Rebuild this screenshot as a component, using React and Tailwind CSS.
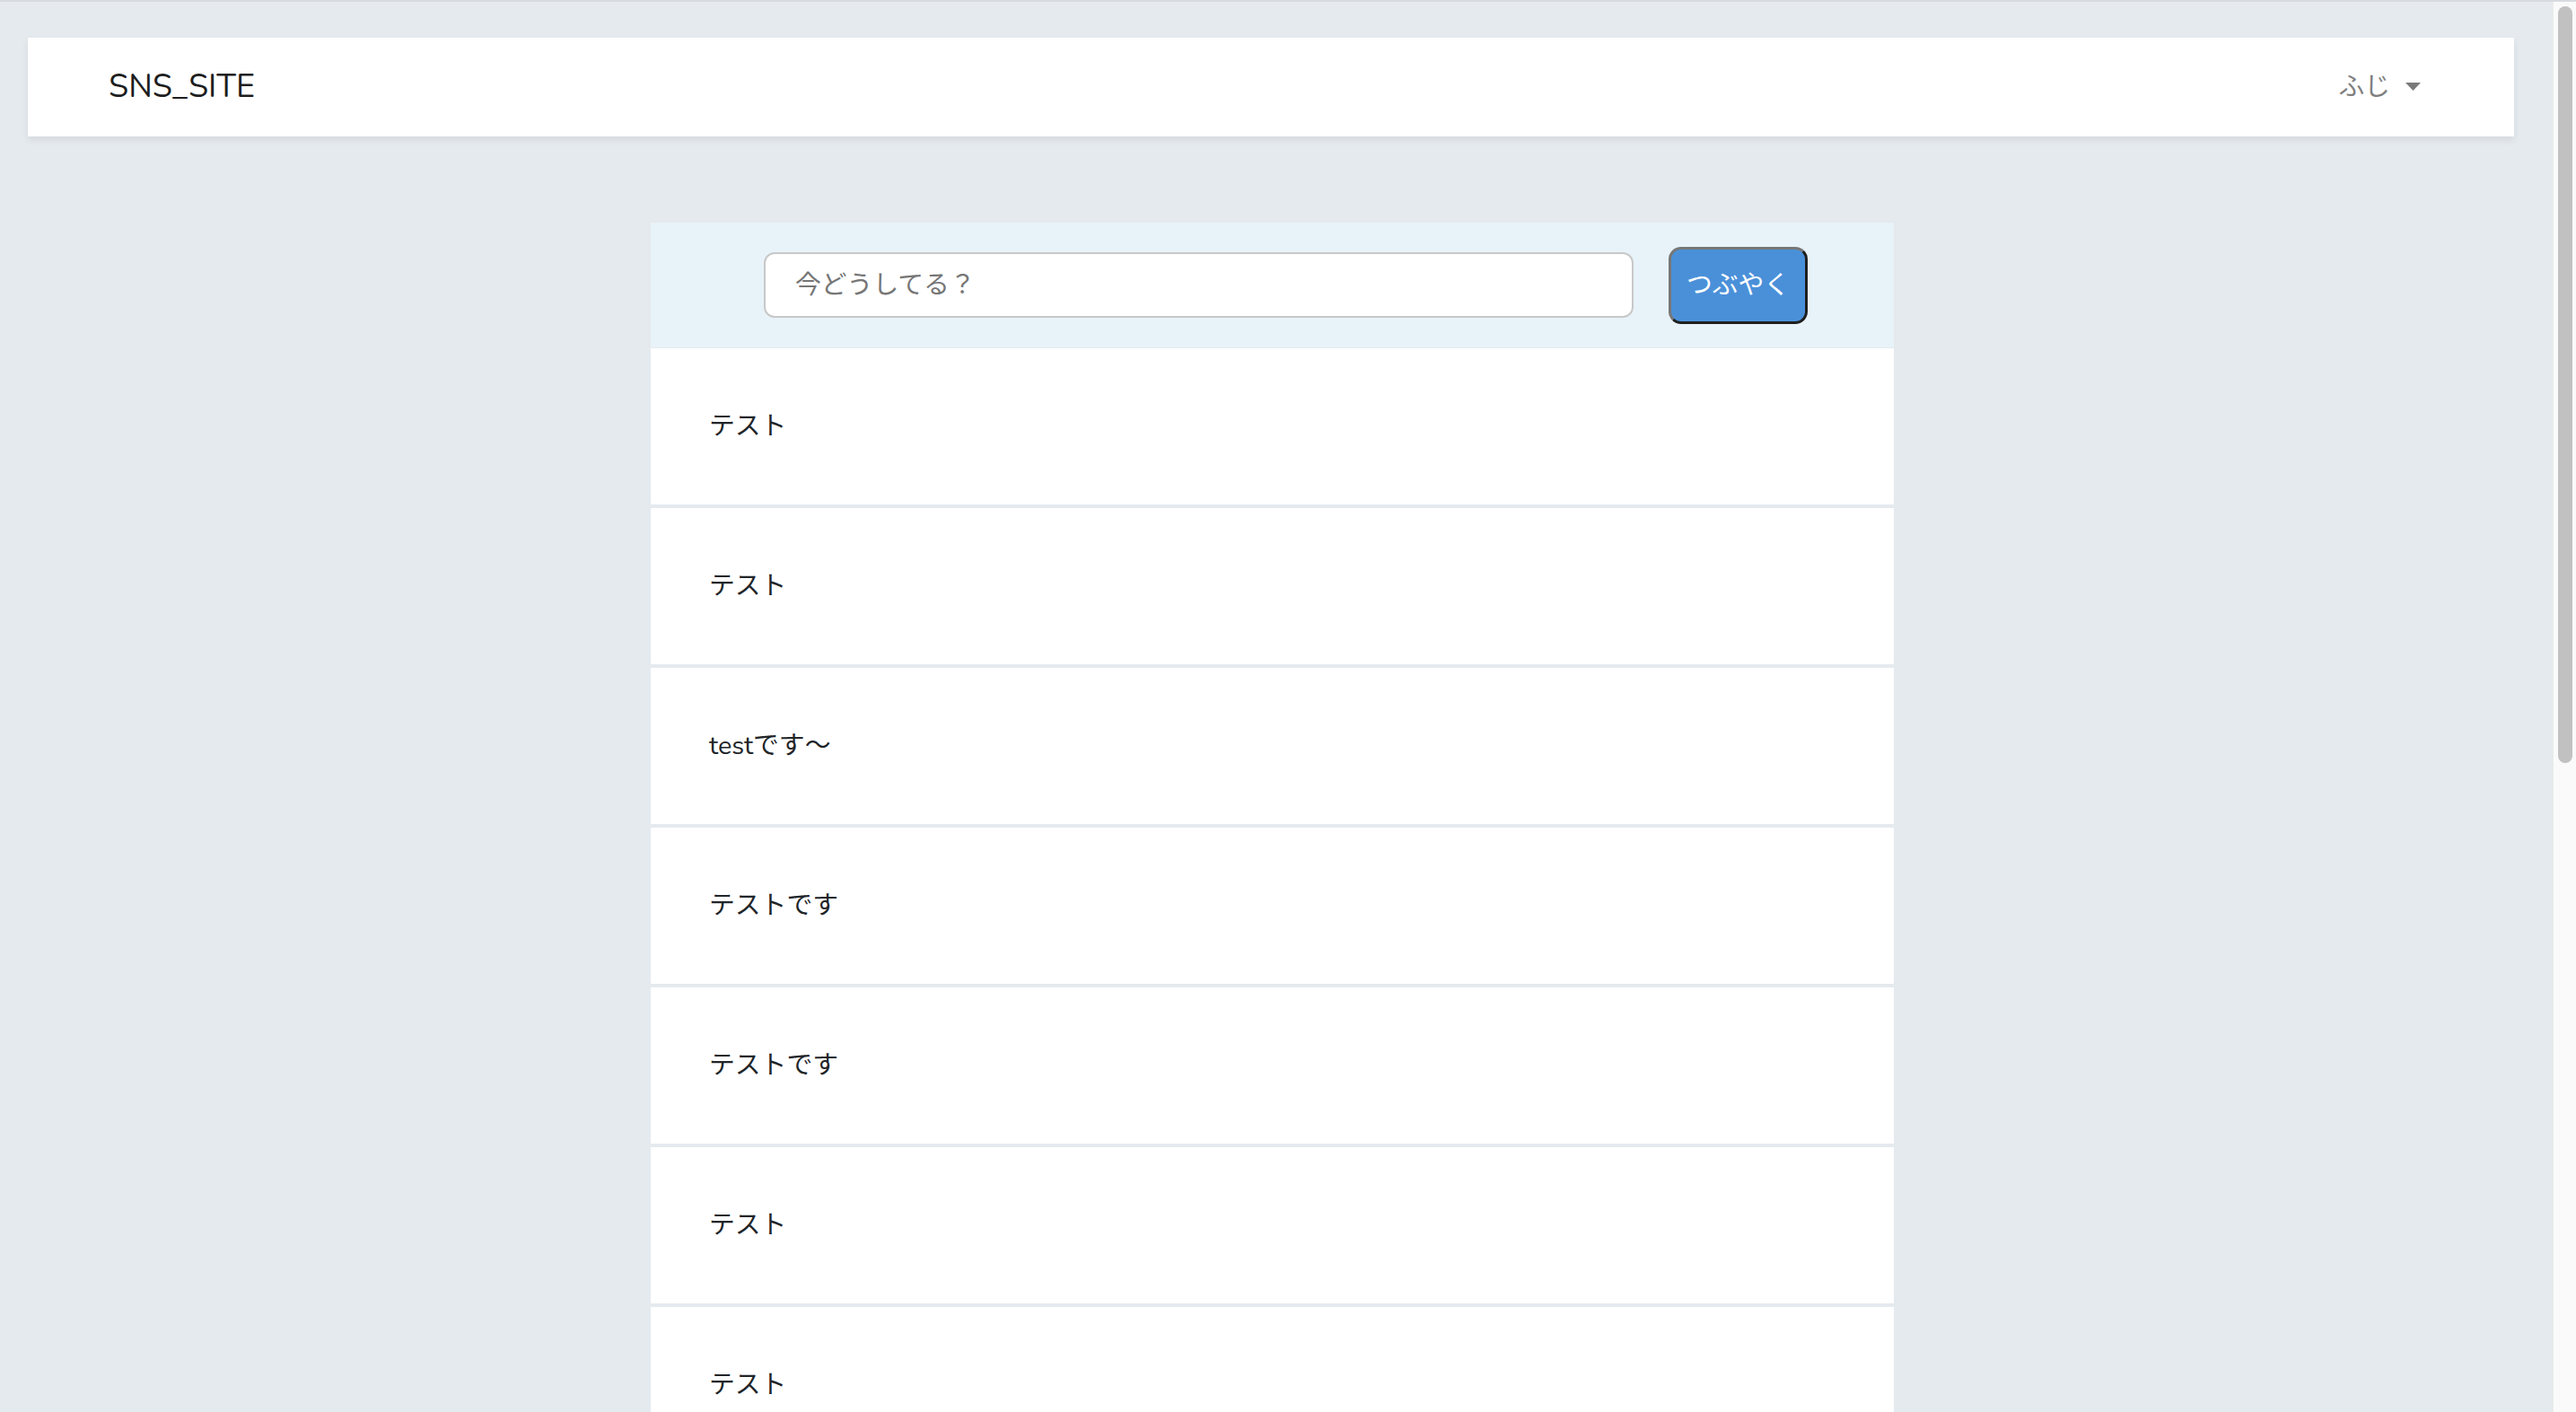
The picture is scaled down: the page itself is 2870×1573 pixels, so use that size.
import React from "react";

const posts = [
  "テスト",
  "テスト",
  "testです～",
  "テストです",
  "テストです",
  "テスト",
  "テスト",
  "テスト",
  "テスト",
];

export default function App() {
  return (
    <div
      className="h-screen w-screen overflow-hidden flex flex-col bg-[#e5eaef]"
      style={{ fontFamily: '"Nunito", Lato, "Noto Sans CJK JP", sans-serif' }}
    >
      <div className="h-[2px] shrink-0 bg-[#d8dce0]" />
      <div className="flex-1 flex min-h-0">
        <div className="flex-1 min-w-0 overflow-hidden">
          <nav className="mt-[40px] ml-[31px] w-[2770px] h-[110px] bg-white shadow-[0_4px_8px_rgba(0,0,0,0.075)] flex items-center justify-between pl-[90px] pr-[104px]">
            <div className="text-[36px] text-[#1e1e1e] leading-none">SNS_SITE</div>
            <div className="flex items-center text-[28.8px] text-[#7f7f7f] leading-none">
              <span>ふじ</span>
              <svg className="ml-[17px]" width="17" height="9" viewBox="0 0 17 9">
                <path d="M0 0 L17 0 L8.5 9 Z" fill="#7a7a7a" />
              </svg>
            </div>
          </nav>

          <main className="mt-[96px] ml-[725px] w-[1385px]">
            <div className="h-[139px] bg-[#e8f3f9] flex items-center pl-[126px] gap-[39px]">
              <div className="w-[969px] h-[73px] bg-white border-2 border-[#c8c8c8] rounded-[12px] flex items-center pl-[33px] text-[28.8px] text-[#767676]">
                今どうしてる？
              </div>
              <button className="w-[155px] h-[86px] bg-[#4a90d9] text-white text-[28.8px] rounded-[14px] border-[3px] border-t-[#777777] border-l-[#777777] border-b-[#1f1f1f] border-r-[#1f1f1f] flex items-center justify-center">
                つぶやく
              </button>
            </div>
            <div className="flex flex-col gap-[4px] pt-[1px]">
              {posts.map((p, i) => (
                <div
                  key={i}
                  className="h-[174px] bg-white flex items-center pl-[65px] text-[28.8px] text-[#212529]"
                >
                  {p}
                </div>
              ))}
            </div>
          </main>
        </div>
        <div className="w-[26px] shrink-0 bg-[#fafafa] border-l border-[#ebebeb]">
          <div className="mt-[5px] ml-[5px] w-[16px] h-[843px] rounded-full bg-[#c1c1c1]" />
        </div>
      </div>
    </div>
  );
}
